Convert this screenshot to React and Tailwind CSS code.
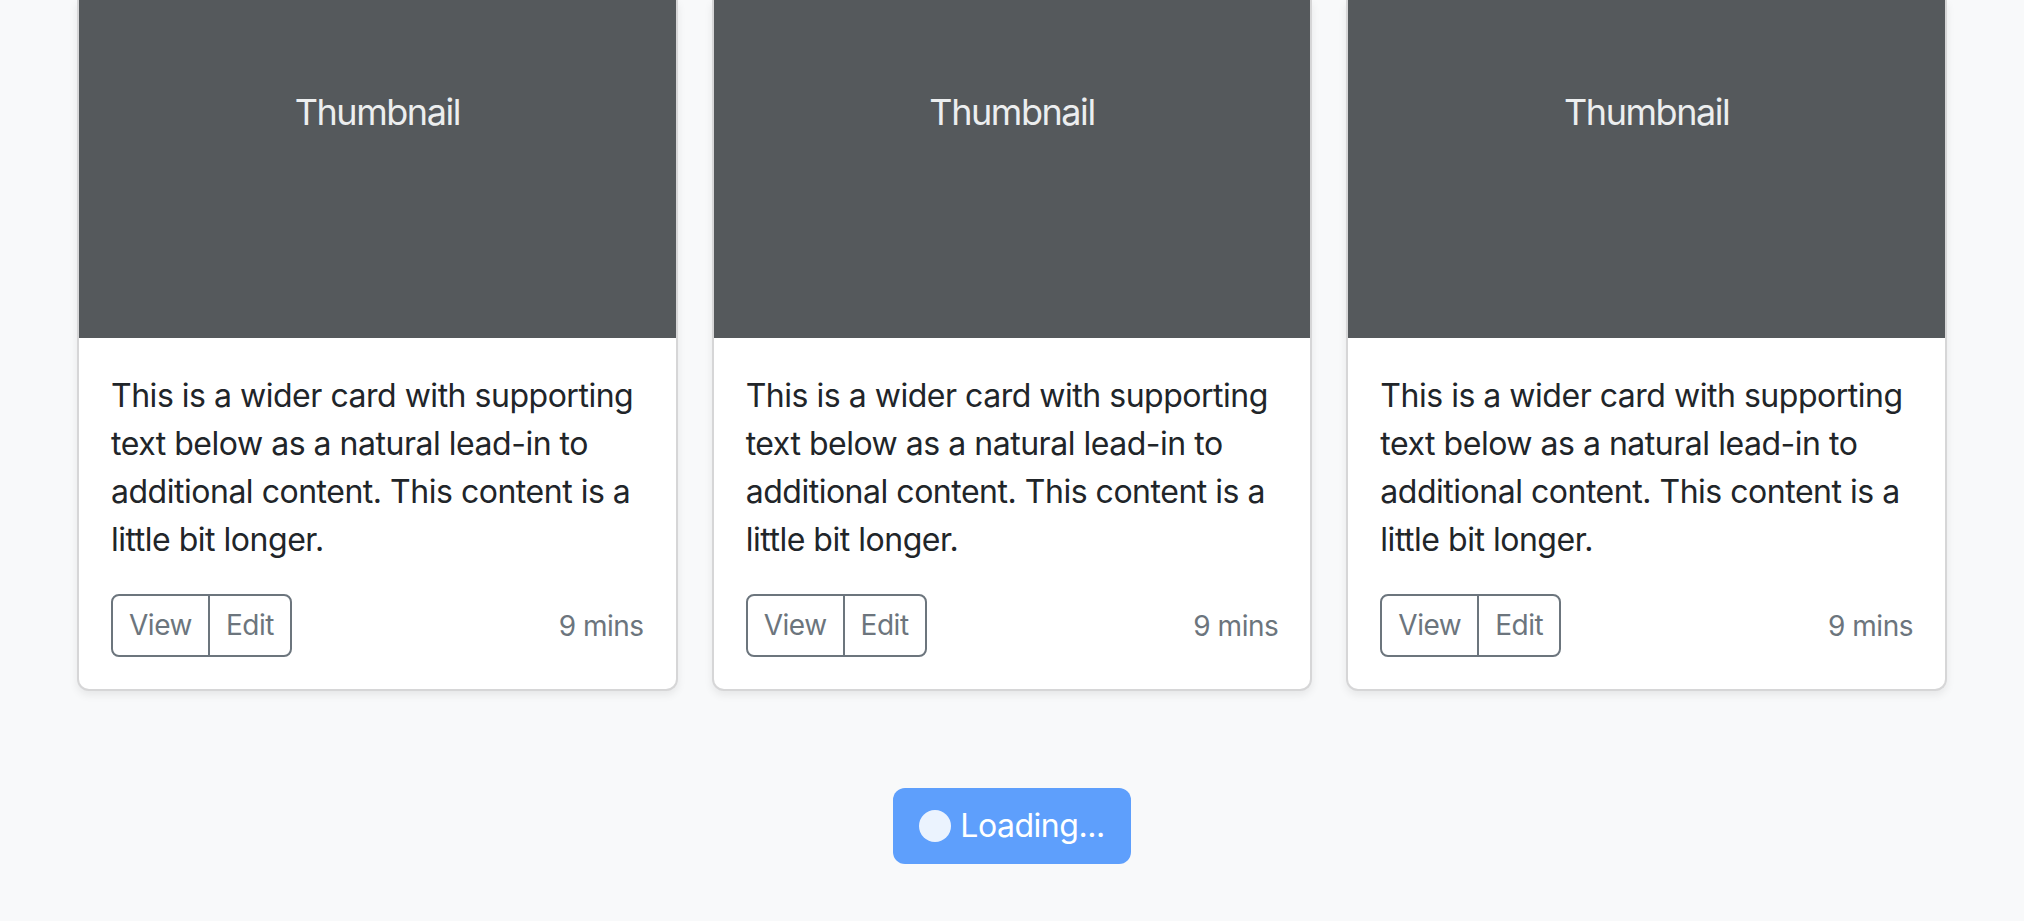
export default function App() {
  const cards = [1, 2, 3];

  return (
    <div className="min-h-screen bg-[#f8f9fa] font-['Inter',sans-serif] tracking-[-0.03em] text-[#212529]">
      <div className="flex gap-[34px] px-[77px]">
        {cards.map((n) => (
          <div
            key={n}
            className="flex flex-1 flex-col overflow-hidden rounded-b-[12px] border-2 border-t-0 border-[#d6d6d7] bg-white shadow-[0_4px_8px_rgba(0,0,0,0.075)]"
          >
            <div className="h-[338px] bg-[#55595c] pt-[85px] text-center text-[36px] leading-[54px] tracking-[-0.04em] text-[#eceeef]">
              Thumbnail
            </div>
            <div className="p-[32px]">
              <p className="mb-[30px] pt-[2px] text-[32px] leading-[48px]">
                This is a wider card with supporting text below as a natural lead-in to additional content. This
                content is a little bit longer.
              </p>
              <div className="flex items-center justify-between">
                <div className="flex">
                  <button className="rounded-l-[8px] border-2 border-[#6c757d] px-[16px] pt-[8px] pb-[9px] text-[28px] leading-[42px] text-[#6c757d]">
                    View
                  </button>
                  <button className="-ml-[2px] rounded-r-[8px] border-2 border-[#6c757d] px-[16px] pt-[8px] pb-[9px] text-[28px] leading-[42px] text-[#6c757d]">
                    Edit
                  </button>
                </div>
                <small className="text-[28px] leading-[42px] text-[#6c757d]">9 mins</small>
              </div>
            </div>
          </div>
        ))}
      </div>

      <div className="flex justify-center pt-[97px]">
        <button
          disabled
          className="flex items-center gap-[9px] rounded-[12px] border-2 border-transparent bg-[#5e9ffc] px-[24px] py-[12px] text-[32px] leading-[48px] text-white"
        >
          <span className="inline-block h-[32px] w-[32px] rounded-full bg-[#ebf3fe]"></span>
          Loading...
        </button>
      </div>
    </div>
  );
}
